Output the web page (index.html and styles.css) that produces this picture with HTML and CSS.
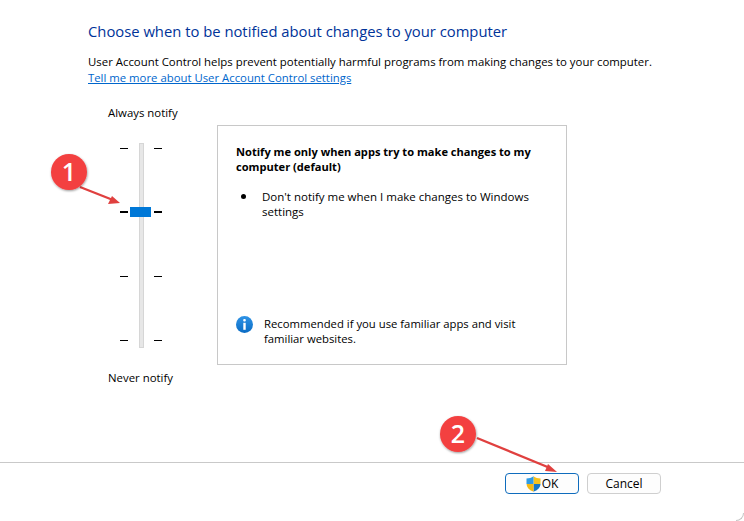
FILE: index.html
```html
<!DOCTYPE html>
<html lang="en">
<head>
<meta charset="utf-8">
<title>User Account Control Settings</title>
<link rel="stylesheet" href="styles.css">
</head>
<body>
<div class="window">
  <main class="content">
    <h1 class="title">Choose when to be notified about changes to your computer</h1>
    <p class="intro">User Account Control helps prevent potentially harmful programs from making changes to your computer.</p>
    <a class="link" href="#">Tell me more about User Account Control settings</a>
    <div class="settings">
      <div class="slider-col">
        <div class="slider-label">Always notify</div>
        <div class="slider">
          <div class="track"></div>
          <div class="stop"><i class="tick"></i><i class="tick"></i></div>
          <div class="stop stop-active"><i class="tick"></i><b class="thumb"></b><i class="tick"></i></div>
          <div class="stop"><i class="tick"></i><i class="tick"></i></div>
          <div class="stop"><i class="tick"></i><i class="tick"></i></div>
        </div>
        <div class="slider-label slider-label-end">Never notify</div>
      </div>
      <section class="panel">
        <h2 class="panel-title">Notify me only when apps try to make changes to my computer (default)</h2>
        <ul class="panel-list">
          <li>Don't notify me when I make changes to Windows settings</li>
        </ul>
        <div class="note">
          <svg class="info" width="17" height="17" viewBox="0 0 17 17" aria-hidden="true">
            <defs><linearGradient id="ig" x1="0" y1="0" x2="0" y2="1"><stop offset="0" stop-color="#2f93e6"/><stop offset="1" stop-color="#0a6cc4"/></linearGradient></defs>
            <circle cx="8.5" cy="8.5" r="8.5" fill="url(#ig)"/>
            <rect x="7.2" y="3" width="2.6" height="2.5" rx="1" fill="#fff"/>
            <rect x="7.3" y="6.8" width="2.4" height="7" fill="#fff"/>
          </svg>
          <p class="note-text">Recommended if you use familiar apps and visit familiar websites.</p>
        </div>
      </section>
    </div>
  </main>
  <footer class="footer">
    <button class="btn btn-primary" type="button">
      <svg class="shield" width="15" height="16" viewBox="0 0 15 16" aria-hidden="true">
        <path d="M7.5 0.3 C9.5 1.8 12 2.5 14.5 2.6 V8 H7.5 Z" fill="#f6c21c"/>
        <path d="M0.5 2.6 C3 2.5 5.5 1.8 7.5 0.3 V8 H0.5 Z" fill="#2f9be4"/>
        <path d="M7.5 8 H14.5 C14.4 11.5 11.5 14.3 7.5 15.7 Z" fill="#1577c7"/>
        <path d="M0.6 8 H7.5 V15.7 C3.5 14.3 0.7 11.5 0.6 8 Z" fill="#f4b915"/>
      </svg>OK</button>
    <button class="btn" type="button">Cancel</button>
  </footer>
  <svg class="marks" width="744" height="521" viewBox="0 0 744 521" aria-hidden="true">
    <defs>
      <filter id="sh" x="-30%" y="-30%" width="160%" height="160%"><feDropShadow dx="0.5" dy="1" stdDeviation="1" flood-color="#000" flood-opacity=".4"/></filter>
    </defs>
    <g fill="#e0403f" stroke="#e0403f">
      <line x1="80" y1="187" x2="113" y2="200" stroke-width="2.4"/>
      <path d="M120 203 L108 204 L112 196 Z" stroke="none"/>
      <line x1="477" y1="438" x2="550" y2="468" stroke-width="2.4"/>
      <path d="M557 472 L545 471 L548 464 Z" stroke="none"/>
    </g>
    <circle cx="69" cy="172" r="18" fill="#f33f3f" filter="url(#sh)"/>
    <circle cx="458" cy="434" r="18" fill="#f33f3f" filter="url(#sh)"/>
    <text class="mark-num" x="69" y="181">1</text>
    <text class="mark-num" x="458" y="443">2</text>
  </svg>
  <div class="corner"></div>
</div>
</body>
</html>
```
FILE: styles.css
```css
* { box-sizing: border-box; }
html, body { margin: 0; padding: 0; background: #fff; }
body {
  font-family: "Open Sans", "Noto Sans", "Liberation Sans", sans-serif;
  font-size: 11.4px;
  line-height: 16px;
  color: #000;
}
.window {
  position: relative;
  width: 744px;
  height: 521px;
  display: flex;
  flex-direction: column;
  overflow: hidden;
  background: #fff;
}
.content { flex: 1; padding: 21px 0 0 88px; }
.title {
  margin: 0;
  font-size: 14.8px;
  line-height: 20px;
  font-weight: 400;
  color: #003399;
}
.intro { margin: 13px 0 0; white-space: nowrap; }
.link { display: block; color: #0066cc; text-decoration: underline; white-space: nowrap; font-size: 11.35px; }
.settings { display: flex; margin-top: 39px; }
.slider-col { width: 109px; margin-top: -20px; margin-left: 20px; }
.slider-label { height: 16px; }
.slider-label-end { margin-top: 22px; }
.slider {
  position: relative;
  width: 42px;
  margin: 21px 0 0 12px;
  height: 206px;
  display: flex;
  flex-direction: column;
  gap: 52px;
}
.track {
  position: absolute;
  left: 19px;
  top: 1px;
  width: 5px;
  height: 205px;
  background: #e7e7e7;
  border: 1px solid #d6d6d6;
}
.stop {
  position: relative;
  height: 12px;
  display: flex;
  justify-content: space-between;
  align-items: center;
}
.tick { display: block; width: 8px; height: 1px; background: #000; }
.stop-active .tick { height: 2px; }
.thumb {
  position: absolute;
  left: 10px;
  top: 1px;
  width: 21px;
  height: 10px;
  background: #0078d7;
}
.panel {
  width: 350px;
  height: 240px;
  border: 1px solid #c8c8c8;
  padding: 18px 18px 0;
  line-height: 15px;
  display: flex;
  flex-direction: column;
}
.panel-title { margin: 0; font-size: 11.1px; line-height: 15px; font-weight: 700; }
.panel-list { list-style: none; margin: 15px 0 0; padding: 0 10px 0 26px; position: relative; font-size: 11.5px; }
.panel-list li::before {
  content: "";
  position: absolute;
  left: 5px;
  top: 5px;
  width: 5px;
  height: 5px;
  border-radius: 50%;
  background: #000;
}
.note { margin-top: auto; margin-bottom: 18px; display: flex; align-items: flex-start; gap: 11px; font-size: 11.3px; }
.info { flex: none; }
.note-text { margin: 0; width: 270px; }
.footer {
  height: 59px;
  border-top: 1px solid #c9c9c9;
  display: flex;
  justify-content: flex-end;
  align-items: flex-start;
  gap: 8px;
  padding: 10px 83px 0 0;
}
.btn {
  width: 74px;
  height: 21px;
  padding: 0;
  border: 1px solid #cfcfcf;
  border-radius: 4px;
  background: #fdfdfd;
  font: inherit;
  font-size: 12px;
  line-height: 17px;
  color: #000;
  display: flex;
  align-items: center;
  justify-content: center;
}
.btn-primary { border-color: #0f6cbd; }
.shield { margin-right: 1px; flex: none; }
.marks { position: absolute; left: 0; top: 0; pointer-events: none; }
.mark-num {
  font-family: "Open Sans", "Liberation Sans", sans-serif;
  font-size: 25px;
  font-weight: 600;
  fill: #fff;
  text-anchor: middle;
}
.corner {
  position: absolute;
  right: 0;
  bottom: 0;
  width: 8px;
  height: 8px;
  border-right: 1px solid #c4c4c4;
  border-bottom: 1px solid #c4c4c4;
  border-bottom-right-radius: 8px;
}
```
